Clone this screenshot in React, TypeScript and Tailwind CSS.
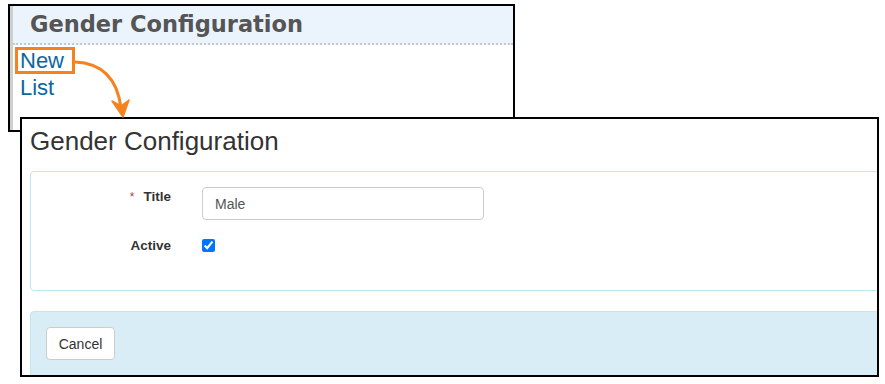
import React from 'react';

const sans = "font-['Liberation_Sans',Arial,sans-serif]";

function Annotation() {
  // orange highlight box around "New" and the arrow pointing to the form
  return (
    <svg
      className="absolute left-0 top-0 z-20 pointer-events-none"
      width={885}
      height={384}
      viewBox="0 0 885 384"
    >
      <rect x={16.5} y={48.5} width={57} height={24} fill="none" stroke="#f5821f" strokeWidth={3} />
      <path
        d="M75 62 C 99 63, 117 76, 121 108"
        fill="none"
        stroke="#f5821f"
        strokeWidth={3}
        strokeLinecap="round"
      />
      <polygon points="112,101 123,117 129,100 121,106" fill="#f5821f" stroke="#f5821f" strokeWidth={1.5} strokeLinejoin="round" />
    </svg>
  );
}

function ListPanel() {
  return (
    <section className="w-[507px] h-[128px] border-2 border-black bg-white">
      <div className="h-full border-l-[3px] border-[#cfcfcf]">
        <div className="h-[39px] bg-[#ebf3fd] border-b-2 border-dotted border-[#c8c8c8] pl-[17px]">
          <h1 className="font-['DejaVu_Sans',Verdana,sans-serif] font-bold text-[22.5px] leading-[37px] text-[#555555]">
            Gender Configuration
          </h1>
        </div>
        <div className={`${sans} pl-[7px] pt-[2px] text-[22px] leading-[27px] text-[#0a67a3]`}>
          <a className="block w-fit">New</a>
          <a className="block w-fit">List</a>
        </div>
      </div>
    </section>
  );
}

function FormPanel() {
  return (
    <section
      className={`${sans} relative z-10 ml-[12px] mt-[-15px] w-[859px] h-[260px] border-2 border-black bg-white overflow-hidden pl-[8px] pt-[7px]`}
    >
      <h2 className="text-[26px] leading-[30px] text-[#333333] mb-[15px]">Gender Configuration</h2>

      <div className="w-[900px] h-[120px] border border-[#bce8f1] rounded-[4px] pt-[15px]">
        <div className="flex items-start">
          <label className="w-[140px] text-right text-[13.5px] leading-[20px] font-bold text-[#333333]">
            <span className="text-[#a94442] font-normal text-[12px] mr-[9px] align-top">*</span>
            Title
          </label>
          <input
            readOnly
            value="Male"
            className="ml-[31px] w-[282px] h-[33px] border border-[#cccccc] rounded-[4px] px-[12px] text-[14px] text-[#555555] bg-white outline-none"
          />
        </div>
        <div className="flex items-start mt-[16px]">
          <label className="w-[140px] text-right text-[13.5px] leading-[20px] font-bold text-[#333333]">
            Active
          </label>
          <input
            type="checkbox"
            readOnly
            checked
            className="ml-[31px] mt-[3px] w-[13px] h-[13px]"
          />
        </div>
      </div>

      <div className="mt-[20px] w-[900px] h-[80px] bg-[#d9edf7] border border-[#bce8f1] rounded-[4px] pt-[15px] pl-[15px]">
        <button className="w-[69px] h-[33px] pt-[2px] bg-white border border-[#cccccc] rounded-[4px] text-[14px] text-[#333333]">
          Cancel
        </button>
      </div>
    </section>
  );
}

export default function App() {
  return (
    <div className="relative w-[885px] h-[384px] bg-white overflow-hidden">
      <div className="pt-[4px] pl-[8px]">
        <ListPanel />
        <FormPanel />
      </div>
      <Annotation />
    </div>
  );
}
